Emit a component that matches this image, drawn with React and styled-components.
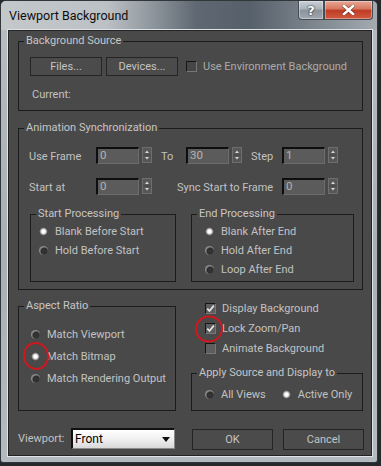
import React from 'react'
import styled, { createGlobalStyle } from 'styled-components'

const GlobalStyle = createGlobalStyle`
  html, body {
    margin: 0;
    padding: 0;
    background: #26292c;
  }
  body {
    font-family: Roboto, "Liberation Sans", Arial, sans-serif;
    font-size: 11px;
    color: #c2c2c2;
  }
  #root {
    width: 381px;
    height: 466px;
  }
`

// window chrome

const Window = styled.div`
  width: 378px;
  height: 463px;
  box-sizing: border-box;
  display: flex;
  flex-direction: column;
  border: 1px solid #31363b;
  border-radius: 6px 6px 3px 3px;
  background: linear-gradient(180deg, #b7bdc2 0%, #a8afb5 55%, #b3bac0 100%);
  overflow: hidden;
`

const TitleBar = styled.div`
  height: 29px;
  flex: none;
  display: flex;
  align-items: flex-start;
  padding-left: 8px;
  background: linear-gradient(
    90deg,
    #c4c8cb 0%,
    #bcc1c5 28%,
    #8f979e 40%,
    #5f6872 52%,
    #56606a 66%,
    #6d767f 76%,
    #a3aab0 100%
  );
`

const Title = styled.div`
  padding-top: 7px;
  font-size: 12.5px;
  line-height: 15px;
  color: #0e0e0e;
`

const CaptionButtons = styled.div`
  display: flex;
  margin-left: auto;
  margin-right: 4px;
`

const CaptionButton = styled.div`
  width: ${(p) => p.$w}px;
  height: 19px;
  box-sizing: border-box;
  display: flex;
  align-items: center;
  justify-content: center;
  border: 1px solid #454c54;
  border-top: none;
  border-radius: ${(p) => (p.$close ? '0 0 4px 0' : '0 0 0 4px')};
  box-shadow: inset 0 0 0 1px rgba(255, 255, 255, 0.35);
  background: ${(p) =>
    p.$close
      ? 'linear-gradient(180deg, #e7a896 0%, #d7775f 44%, #c03c24 52%, #cf5a3f 100%)'
      : 'linear-gradient(180deg, #c9cfd5 0%, #aab2ba 44%, #8a939c 52%, #a0a8b0 100%)'};
  color: #fff;
  font-family: "DejaVu Sans", sans-serif;
  font-weight: bold;
  font-size: 13px;
  text-shadow: 0 0 2px #222, 0 0 1px #222;
`

const Client = styled.div`
  margin-left: 7px;
  width: 364px;
  height: 426px;
  box-sizing: border-box;
  padding: 3px 8px 0 9px;
  background: #494949;
  border: 1px solid #242424;
  box-shadow: 0 0 0 1px #dfe3e7;
`

// group boxes

const Group = styled.fieldset`
  margin: ${(p) => p.$mt || 0}px 0 0;
  padding: 0;
  min-width: 0;
  border: 1px solid #1c1c1c;
`

const Legend = styled.legend`
  margin-left: 5px;
  padding: 0 2px;
  font-size: 11px;
  line-height: 14px;
  color: #c6c6c6;
`

const GroupBody = styled.div`
  padding: ${(p) => p.$pad};
`

// controls

const PushButton = styled.button`
  width: ${(p) => p.$w}px;
  height: ${(p) => p.$h || 19}px;
  margin: 0 0 0 ${(p) => p.$ml || 0}px;
  padding: 0;
  box-sizing: border-box;
  background: #4b4b4b;
  border: 1px solid #242424;
  color: #c4c4c4;
  font: inherit;
  font-size: 11px;
  flex: none;
`

const CheckBox = styled.span`
  width: 11px;
  height: 11px;
  box-sizing: border-box;
  flex: none;
  display: inline-flex;
  align-items: center;
  justify-content: center;
  background: ${(p) => (p.$dim ? '#464646' : '#5d5d5d')};
  border: 1px solid;
  border-color: #161616 #777 #777 #161616;
`

const RadioDot = styled.span`
  position: relative;
  width: 9px;
  height: 9px;
  flex: none;
  border-radius: 50%;
  background: ${(p) =>
    p.$on
      ? 'radial-gradient(circle at 50% 50%, #ffffff 0 1.6px, #d2d2d2 2.4px, #7a7a7a 3.6px, #3a3a3a 4.5px)'
      : 'radial-gradient(circle at 58% 58%, #333 0 2.2px, #2a2a2a 3px, #6f6f6f 4px, #8a8a8a 4.5px)'};
`

const Ring = styled.span`
  position: absolute;
  left: 50%;
  top: 50%;
  width: ${(p) => p.$w}px;
  height: ${(p) => p.$h}px;
  transform: translate(-50%, -50%) translate(${(p) => p.$dx || 0}px, ${(p) => p.$dy || 0}px) rotate(-12deg);
  box-sizing: border-box;
  border: 2.5px solid #d0171d;
  border-radius: 50%;
  pointer-events: none;
`

const Anchor = styled.span`
  position: relative;
  display: inline-flex;
  flex: none;
`

const OptionRow = styled.div`
  display: flex;
  align-items: center;
  gap: ${(p) => p.$gap || 7}px;
  height: ${(p) => p.$h}px;
  color: ${(p) => (p.$dim ? '#ababab' : '#c2c2c2')};
`

const FieldRow = styled.div`
  display: flex;
  align-items: center;
  height: 17px;
  margin-top: ${(p) => p.$mt || 0}px;
`

const FieldLabel = styled.span`
  flex: none;
  width: ${(p) => p.$w}px;
  margin-left: ${(p) => p.$ml || 0}px;
  padding-top: 2px;
`

const SpinWrap = styled.div`
  display: flex;
  gap: 3px;
  height: 17px;
  flex: none;
`

const SpinField = styled.div`
  width: 43px;
  box-sizing: border-box;
  background: #5b5b5b;
  border-style: solid;
  border-width: 2px 1px 1px 2px;
  border-color: #0e0e0e #6c6c6c #6c6c6c #0e0e0e;
  padding-left: 2px;
  line-height: 12px;
  font-size: 11.5px;
  color: #b3b3b3;
`

const SpinArrows = styled.div`
  width: 10px;
  height: 16px;
  box-sizing: border-box;
  border: 1px solid #6e6e6e;
  background: #575757;
  display: flex;
`

const SubGrid = styled.div`
  display: grid;
  grid-template-columns: 146px 163px;
  column-gap: 15px;
  margin-top: 12px;
`

const SplitGrid = styled.div`
  display: grid;
  grid-template-columns: 158px 172px;
  column-gap: 15px;
  margin-top: ${(p) => p.$mt}px;
  align-items: start;
`

const Column = styled.div`
  display: flex;
  flex-direction: column;
  padding-left: ${(p) => p.$pl || 0}px;
`

const InlineRow = styled.div`
  display: flex;
  align-items: center;
`

const CurrentLabel = styled.div`
  margin: 12px 0 0 2px;
  line-height: 13px;
`

const SelectBox = styled.div`
  width: 104px;
  height: 21px;
  box-sizing: border-box;
  display: flex;
  align-items: center;
  justify-content: space-between;
  padding: 0 4px 0 2px;
  border-style: solid;
  border-width: 2px 1px 1px 2px;
  border-color: #111 #8a8a8a #8a8a8a #111;
  background: linear-gradient(180deg, #ffffff 0%, #f0f0f0 50%, #d9d9d9 100%);
  color: #000;
  font-size: 12px;
`

const SpinArrowIcon = () => (
  <SpinArrows>
    <svg width="8" height="14" viewBox="0 0 8 14">
      <path d="M2 5 L4 2.5 L6 5 Z" fill="#d6d6d6" />
      <line x1="0" y1="7" x2="8" y2="7" stroke="#444" />
      <path d="M2 9 L4 11.5 L6 9 Z" fill="#d6d6d6" />
    </svg>
  </SpinArrows>
)

const Spinner = ({ value }) => (
  <SpinWrap>
    <SpinField>{value}</SpinField>
    <SpinArrowIcon />
  </SpinWrap>
)

const Check = ({ on, dim }) => (
  <CheckBox $dim={dim}>
    {on && (
      <svg width="9" height="9" viewBox="0 0 9 9">
        <polyline
          points="1.3,4.6 3.5,7 7.8,1.6"
          fill="none"
          stroke="#e6e6e6"
          strokeWidth="1.7"
        />
      </svg>
    )}
  </CheckBox>
)

const Option = ({ label, on, h, ring }) => (
  <OptionRow $h={h}>
    <RadioDot $on={on}>{ring && <Ring $w={26} $h={28} />}</RadioDot>
    {label}
  </OptionRow>
)

const App = () => {
  return (
    <>
      <GlobalStyle />
      <Window>
        <TitleBar>
          <Title>Viewport Background</Title>
          <CaptionButtons>
            <CaptionButton $w={26}>?</CaptionButton>
            <CaptionButton $w={49} $close>
              <svg width="13" height="10" viewBox="0 0 13 10">
                <path
                  d="M2 1 L11 9 M11 1 L2 9"
                  stroke="#3a1a14"
                  strokeWidth="4"
                  strokeLinecap="square"
                  opacity="0.5"
                />
                <path
                  d="M2 1 L11 9 M11 1 L2 9"
                  stroke="#fff"
                  strokeWidth="2.6"
                  strokeLinecap="square"
                />
              </svg>
            </CaptionButton>
          </CaptionButtons>
        </TitleBar>

        <Client>
          <Group>
            <Legend>Background Source</Legend>
            <GroupBody $pad="9px 0 9px 11px">
              <InlineRow>
                <PushButton $w={72}>Files...</PushButton>
                <PushButton $w={72} $ml={4}>
                  Devices...
                </PushButton>
                <OptionRow $h={19} $gap={6} $dim style={{ marginLeft: 8 }}>
                  <Check dim />
                  Use Environment Background
                </OptionRow>
              </InlineRow>
              <CurrentLabel>Current:</CurrentLabel>
            </GroupBody>
          </Group>

          <Group $mt={10}>
            <Legend>Animation Synchronization</Legend>
            <GroupBody $pad="12px 0 7px 10px">
              <FieldRow>
                <FieldLabel $w={67}>Use Frame</FieldLabel>
                <Spinner value="0" />
                <FieldLabel $w={25} $ml={9}>
                  To
                </FieldLabel>
                <Spinner value="30" />
                <FieldLabel $w={31} $ml={9}>
                  Step
                </FieldLabel>
                <Spinner value="1" />
              </FieldRow>
              <FieldRow $mt={14}>
                <FieldLabel $w={67}>Start at</FieldLabel>
                <Spinner value="0" />
                <FieldLabel $w={105} $ml={25}>
                  Sync Start to Frame
                </FieldLabel>
                <Spinner value="0" />
              </FieldRow>

              <SubGrid style={{ marginLeft: 1 }}>
                <Group>
                  <Legend>Start Processing</Legend>
                  <GroupBody $pad="1px 0 2px 8px">
                    <Option h={19} on label="Blank Before Start" />
                    <Option h={19} label="Hold Before Start" />
                  </GroupBody>
                </Group>
                <Group>
                  <Legend>End Processing</Legend>
                  <GroupBody $pad="1px 0 2px 13px">
                    <Option h={19} on label="Blank After End" />
                    <Option h={19} label="Hold After End" />
                    <Option h={19} label="Loop After End" />
                  </GroupBody>
                </Group>
              </SubGrid>
            </GroupBody>
          </Group>

          <SplitGrid $mt={8}>
            <Group $mt={1}>
              <Legend>Aspect Ratio</Legend>
              <GroupBody $pad="10px 0 21px 12px">
                <Option h={22} label="Match Viewport" />
                <Option h={22} on ring label="Match Bitmap" />
                <Option h={22} label="Match Rendering Output" />
              </GroupBody>
            </Group>

            <Column>
              <Column $pl={14}>
                <OptionRow $h={20} $gap={6}>
                  <Check on />
                  Display Background
                </OptionRow>
                <OptionRow $h={20} $gap={6}>
                  <Anchor>
                    <Check on />
                    <Ring $w={28} $h={27} $dx={-2} $dy={1} />
                  </Anchor>
                  Lock Zoom/Pan
                </OptionRow>
                <OptionRow $h={20} $gap={6}>
                  <Check />
                  Animate Background
                </OptionRow>
              </Column>
              <Group $mt={8}>
                <Legend>Apply Source and Display to</Legend>
                <GroupBody $pad="5px 0 6px 13px">
                  <InlineRow>
                    <Option h={19} label="All Views" />
                    <span style={{ width: 16 }} />
                    <Option h={19} on label="Active Only" />
                  </InlineRow>
                </GroupBody>
              </Group>
            </Column>
          </SplitGrid>

          <SplitGrid $mt={17}>
            <InlineRow>
              <FieldLabel $w={53} style={{ paddingTop: 0 }}>
                Viewport:
              </FieldLabel>
              <SelectBox>
                Front
                <svg width="8" height="5" viewBox="0 0 8 5">
                  <path d="M0 0 H8 L4 5 Z" fill="#111" />
                </svg>
              </SelectBox>
            </InlineRow>
            <InlineRow style={{ paddingTop: 1 }}>
              <PushButton $w={81} $h={21} $ml={1}>
                OK
              </PushButton>
              <PushButton $w={81} $h={21} $ml={10}>
                Cancel
              </PushButton>
            </InlineRow>
          </SplitGrid>
        </Client>
      </Window>
    </>
  )
}

export default App
